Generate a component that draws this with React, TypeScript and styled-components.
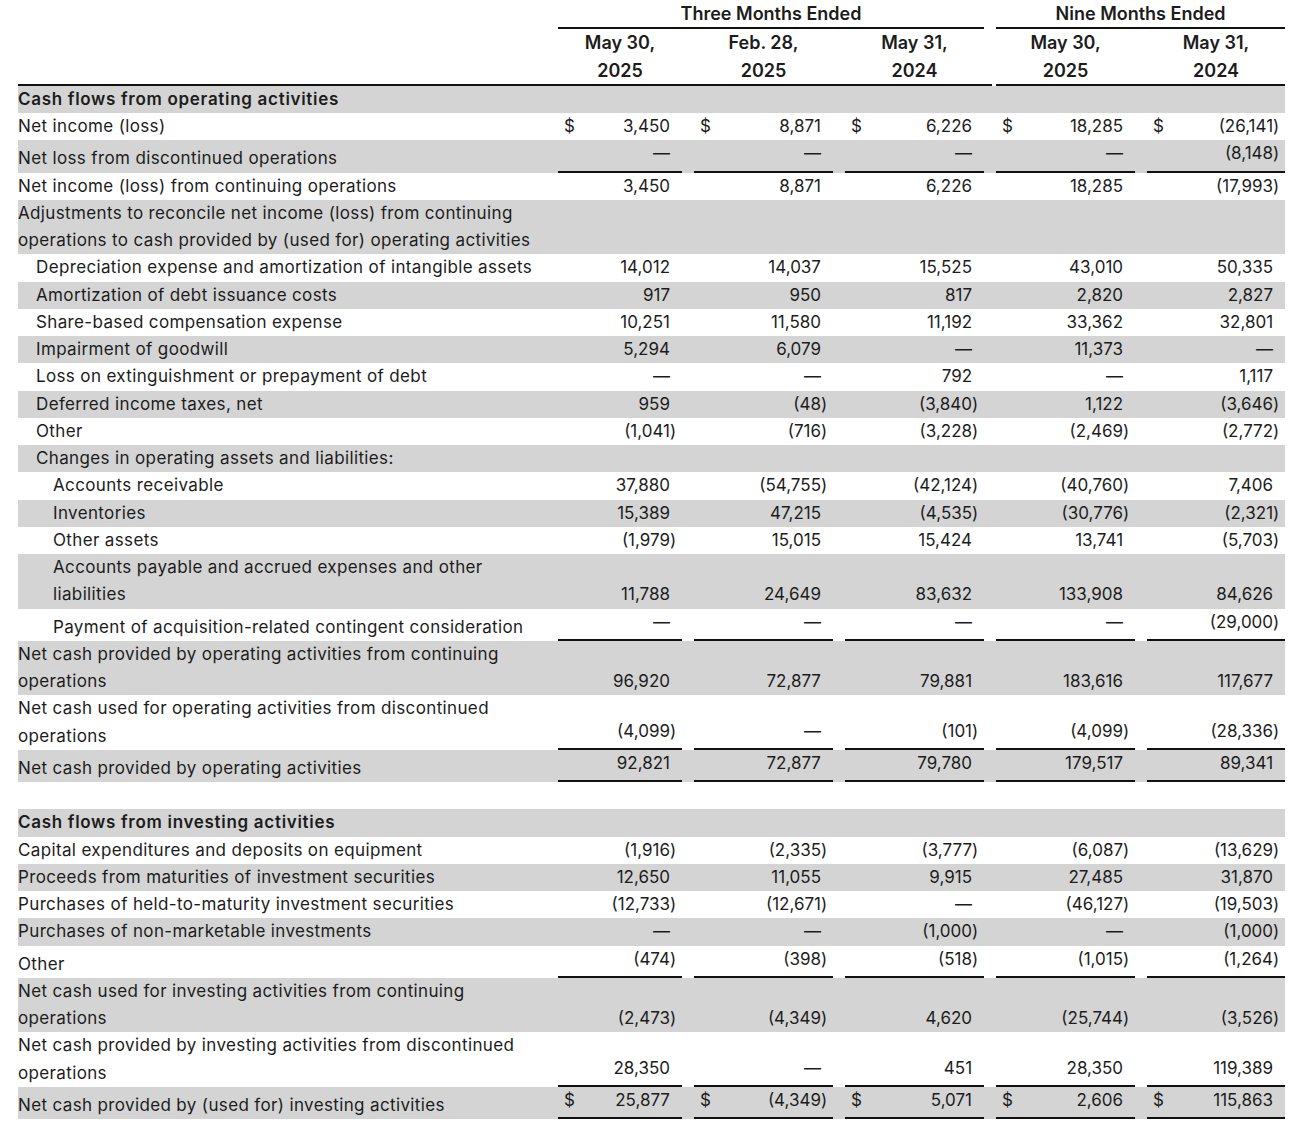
import React from "react";
import styled, { createGlobalStyle } from "styled-components";

const GlobalStyle = createGlobalStyle`
  html, body { margin: 0; padding: 0; background: #ffffff; }
  body { font-family: Inter, "Noto Sans", "Liberation Sans", sans-serif; color: #1c1c1c; }
`;

const Page = styled.div`
  padding: 0 0 20px 18px;
`;

const Table = styled.table`
  table-layout: fixed;
  border-collapse: separate;
  border-spacing: 0;
  width: 1267px;
  font-size: 17px;
  line-height: 27.25px;
`;

const GroupHead = styled.th`
  font-size: 18px;
  font-weight: 600;
  text-align: center;
  padding: 0;
  border-bottom: 2px solid #111;
`;

const DateHead = styled.th`
  font-size: 18px;
  font-weight: 600;
  text-align: center;
  padding: 0;
  border-bottom: 2px solid #111;
`;

const BlankHead = styled.th<{ $rule?: "full" | "part" | "none" }>`
  padding: 0;
  border-bottom: ${(p) => (p.$rule === "full" ? "2px solid #111" : "2px solid transparent")};
  background: ${(p) =>
    p.$rule === "part" ? "linear-gradient(#111, #111) left bottom / 8px 2px no-repeat" : "none"};
  background-origin: border-box;
`;

const Row = styled.tr<{ $shade?: boolean }>`
  background: ${(p) => (p.$shade ? "#d4d4d4" : "#ffffff")};
`;

const LabelCell = styled.td<{ $indent: number; $bold?: boolean }>`
  padding: 0 0 0 ${(p) => p.$indent}px;
  vertical-align: bottom;
  white-space: nowrap;
  font-weight: ${(p) => (p.$bold ? 600 : 400)};
  letter-spacing: ${(p) => (p.$bold ? "0.7px" : "0.36px")};
`;

const Spacer = styled.td`
  padding: 0;
`;

const AmountCell = styled.td<{ $rule?: boolean }>`
  padding: 0 0 ${(p) => (p.$rule ? "3px" : "0")};
  vertical-align: bottom;
  border-bottom: ${(p) => (p.$rule ? "2px solid #111" : "0")};
`;

const Amount = styled.div`
  display: flex;
  align-items: baseline;
  padding: 0 5px 0 6px;
  white-space: nowrap;
`;

const Dollar = styled.span`
  flex: none;
`;

const Figure = styled.span`
  margin-left: auto;
  text-align: right;
`;

const Paren = styled.span`
  display: inline-block;
  width: 7px;
  text-align: left;
`;

type Line = {
  label: string[];
  indent?: 0 | 1 | 2;
  bold?: boolean;
  values?: string[];
  rule?: boolean;
  dollar?: boolean;
};

const D = "—";

const lines: Line[] = [
  { label: ["Cash flows from operating activities"], bold: true },
  { label: ["Net income (loss)"], values: ["3,450", "8,871", "6,226", "18,285", "(26,141)"], dollar: true },
  { label: ["Net loss from discontinued operations"], values: [D, D, D, D, "(8,148)"], rule: true },
  { label: ["Net income (loss) from continuing operations"], values: ["3,450", "8,871", "6,226", "18,285", "(17,993)"] },
  {
    label: [
      "Adjustments to reconcile net income (loss) from continuing",
      "operations to cash provided by (used for) operating activities",
    ],
  },
  { label: ["Depreciation expense and amortization of intangible assets"], indent: 1, values: ["14,012", "14,037", "15,525", "43,010", "50,335"] },
  { label: ["Amortization of debt issuance costs"], indent: 1, values: ["917", "950", "817", "2,820", "2,827"] },
  { label: ["Share-based compensation expense"], indent: 1, values: ["10,251", "11,580", "11,192", "33,362", "32,801"] },
  { label: ["Impairment of goodwill"], indent: 1, values: ["5,294", "6,079", D, "11,373", D] },
  { label: ["Loss on extinguishment or prepayment of debt"], indent: 1, values: [D, D, "792", D, "1,117"] },
  { label: ["Deferred income taxes, net"], indent: 1, values: ["959", "(48)", "(3,840)", "1,122", "(3,646)"] },
  { label: ["Other"], indent: 1, values: ["(1,041)", "(716)", "(3,228)", "(2,469)", "(2,772)"] },
  { label: ["Changes in operating assets and liabilities:"], indent: 1 },
  { label: ["Accounts receivable"], indent: 2, values: ["37,880", "(54,755)", "(42,124)", "(40,760)", "7,406"] },
  { label: ["Inventories"], indent: 2, values: ["15,389", "47,215", "(4,535)", "(30,776)", "(2,321)"] },
  { label: ["Other assets"], indent: 2, values: ["(1,979)", "15,015", "15,424", "13,741", "(5,703)"] },
  {
    label: ["Accounts payable and accrued expenses and other", "liabilities"],
    indent: 2,
    values: ["11,788", "24,649", "83,632", "133,908", "84,626"],
  },
  { label: ["Payment of acquisition-related contingent consideration"], indent: 2, values: [D, D, D, D, "(29,000)"], rule: true },
  {
    label: ["Net cash provided by operating activities from continuing", "operations"],
    values: ["96,920", "72,877", "79,881", "183,616", "117,677"],
  },
  {
    label: ["Net cash used for operating activities from discontinued", "operations"],
    values: ["(4,099)", D, "(101)", "(4,099)", "(28,336)"],
    rule: true,
  },
  { label: ["Net cash provided by operating activities"], values: ["92,821", "72,877", "79,780", "179,517", "89,341"], rule: true },
  { label: [""] },
  { label: ["Cash flows from investing activities"], bold: true },
  { label: ["Capital expenditures and deposits on equipment"], values: ["(1,916)", "(2,335)", "(3,777)", "(6,087)", "(13,629)"] },
  { label: ["Proceeds from maturities of investment securities"], values: ["12,650", "11,055", "9,915", "27,485", "31,870"] },
  { label: ["Purchases of held-to-maturity investment securities"], values: ["(12,733)", "(12,671)", D, "(46,127)", "(19,503)"] },
  { label: ["Purchases of non-marketable investments"], values: [D, D, "(1,000)", D, "(1,000)"] },
  { label: ["Other"], values: ["(474)", "(398)", "(518)", "(1,015)", "(1,264)"], rule: true },
  {
    label: ["Net cash used for investing activities from continuing", "operations"],
    values: ["(2,473)", "(4,349)", "4,620", "(25,744)", "(3,526)"],
  },
  {
    label: ["Net cash provided by investing activities from discontinued", "operations"],
    values: ["28,350", D, "451", "28,350", "119,389"],
    rule: true,
  },
  {
    label: ["Net cash provided by (used for) investing activities"],
    values: ["25,877", "(4,349)", "5,071", "2,606", "115,863"],
    rule: true,
    dollar: true,
  },
];

const colWidths = [124, 139, 139, 139, 138];
const indents = [0, 18, 35];

function AmountValue({ value, dollar }: { value?: string; dollar?: boolean }) {
  if (value === undefined) return <Amount>&nbsp;</Amount>;
  const neg = value.endsWith(")");
  const body = neg ? value.slice(0, -1) : value;
  return (
    <Amount>
      {dollar ? <Dollar>$</Dollar> : null}
      <Figure>
        {body}
        <Paren>{neg ? ")" : ""}</Paren>
      </Figure>
    </Amount>
  );
}

const dates = [
  ["May 30,", "2025"],
  ["Feb. 28,", "2025"],
  ["May 31,", "2024"],
  ["May 30,", "2025"],
  ["May 31,", "2024"],
];

export default function App() {
  return (
    <Page>
      <GlobalStyle />
      <Table>
        <colgroup>
          <col style={{ width: 540 }} />
          {colWidths.map((w, i) => (
            <React.Fragment key={i}>
              {i > 0 ? <col style={{ width: 12 }} /> : null}
              <col style={{ width: w }} />
            </React.Fragment>
          ))}
        </colgroup>
        <thead>
          <tr>
            <BlankHead $rule="none" />
            <GroupHead colSpan={5}>Three Months Ended</GroupHead>
            <BlankHead $rule="none" />
            <GroupHead colSpan={3}>Nine Months Ended</GroupHead>
          </tr>
          <tr>
            <BlankHead $rule="full" />
            {dates.map((d, i) => (
              <React.Fragment key={i}>
                {i > 0 ? <BlankHead $rule={i === 3 ? "part" : "full"} /> : null}
                <DateHead>
                  {d[0]}
                  <br />
                  {d[1]}
                </DateHead>
              </React.Fragment>
            ))}
          </tr>
        </thead>
        <tbody>
          {lines.map((ln, r) => (
            <Row key={r} $shade={r % 2 === 0}>
              <LabelCell $indent={indents[ln.indent ?? 0]} $bold={ln.bold}>
                {ln.label.map((t, k) => (
                  <React.Fragment key={k}>
                    {k > 0 ? <br /> : null}
                    {t || "\u00a0"}
                  </React.Fragment>
                ))}
              </LabelCell>
              {colWidths.map((_, c) => (
                <React.Fragment key={c}>
                  {c > 0 ? <Spacer /> : null}
                  <AmountCell $rule={ln.rule}>
                    {ln.values ? <AmountValue value={ln.values[c]} dollar={ln.dollar} /> : null}
                  </AmountCell>
                </React.Fragment>
              ))}
            </Row>
          ))}
        </tbody>
      </Table>
    </Page>
  );
}
